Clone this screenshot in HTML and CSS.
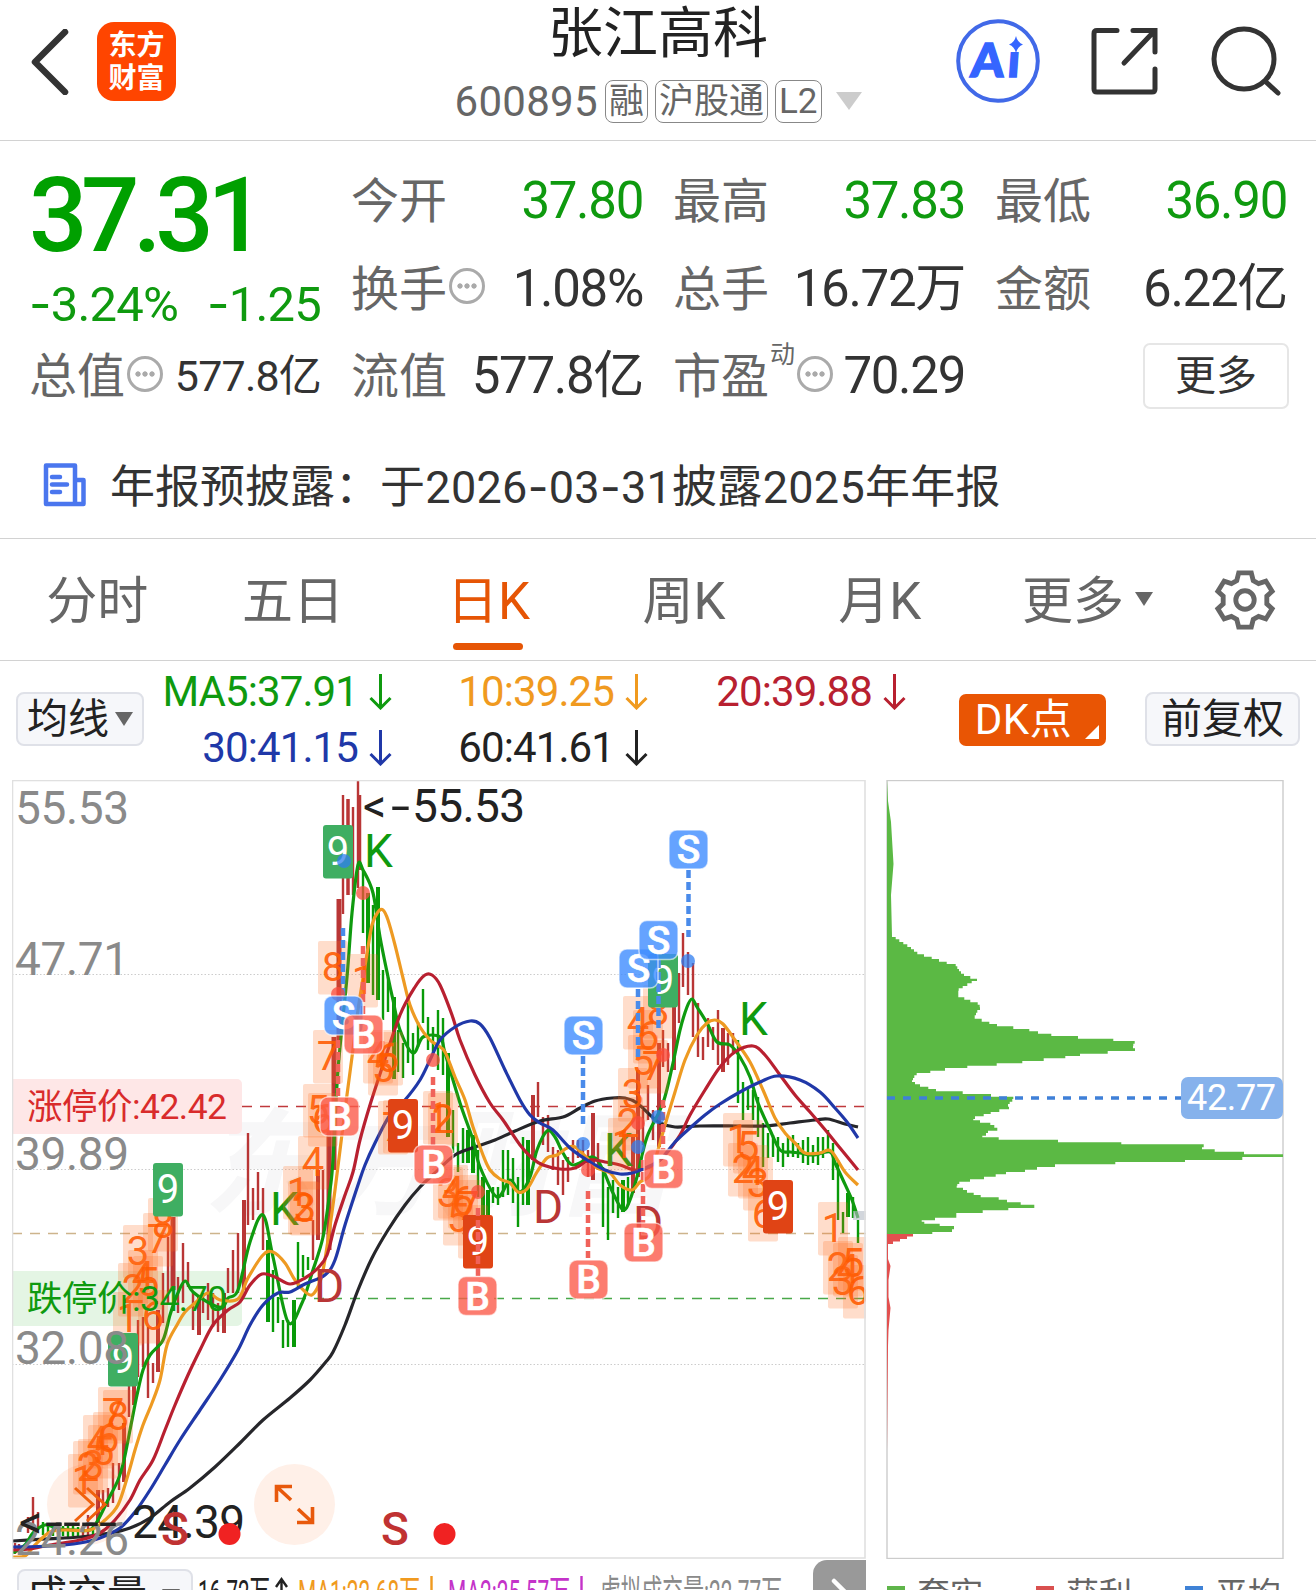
FILE: index.html
```
<!DOCTYPE html>
<html lang="zh-CN">
<head>
    <meta charset="UTF-8">
    <meta name="viewport" content="width=device-width, initial-scale=1.0">
    <title>张江高科 600895</title>
    <link rel="stylesheet" href="styles.css">
</head>
<body>
    <header class="header">
        <div class="header-left">
            <svg class="back" width="38" height="66" viewBox="0 0 38 66"><path d="M34 3 L4 33 L34 63"/></svg>
            <div class="logo"><span>东方</span><span>财富</span></div>
        </div>
        <div class="header-title">
            <h1>张江高科</h1>
            <div class="code">
                <span class="code-num">600895</span>
                <span class="tag">融</span>
                <span class="tag">沪股通</span>
                <span class="tag">L2</span>
                <i class="caret"></i>
            </div>
        </div>
        <div class="header-right">
            <svg class="ai" width="84" height="84" viewBox="0 0 84 84">
                <circle cx="42" cy="42" r="39.8"/>
                <text x="18" y="58" textLength="49" transform="skewX(-4)">Ai</text>
                <rect x="51" y="16" width="15" height="17"/>
                <path d="M60 17 Q61.500 23.500 67 25.500 Q61.500 27.500 60 34 Q58.500 27.500 53 25.500 Q58.500 23.500 60 17Z"/>
            </svg>
            <svg class="share" width="70" height="70" viewBox="0 0 70 70"><path d="M27 4.500 H7 Q4 4.500 4 7.500 V63 Q4 66 7 66 H62 Q65 66 65 63 V43 M43 4.500 H65 V26 M64 5.500 L34 37"/></svg>
            <svg class="search" width="72" height="72" viewBox="0 0 72 72"><circle cx="34" cy="34" r="30"/><path d="M56 57 L68 68"/></svg>
        </div>
    </header>

    <section class="quote">
        <div class="price-box">
            <div class="price">37.31</div>
            <div class="change"><span><span class="dash">-</span>3.24%</span><span><span class="dash">-</span>1.25</span></div>
        </div>
        <div class="item"><label>今开</label><b class="down">37.80</b></div>
        <div class="item"><label>最高</label><b class="down">37.83</b></div>
        <div class="item"><label>最低</label><b class="down">36.90</b></div>
        <div class="item"><label>换手<i class="info"></i></label><b>1.08%</b></div>
        <div class="item"><label>总手</label><b>16.72万</b></div>
        <div class="item"><label>金额</label><b>6.22亿</b></div>
        <div class="item small"><label>总值<i class="info"></i></label><b>577.8亿</b></div>
        <div class="item"><label>流值</label><b>577.8亿</b></div>
        <div class="item"><label>市盈<sup>动</sup><i class="info"></i></label><b>70.29</b></div>
        <div class="item more"><button class="more-btn">更多</button></div>
    </section>

    <section class="notice">
        <svg width="44" height="44" viewBox="0 0 44 44">
            <path d="M3 2.500 H32 V41 H3Z M32 17 H40.500 V41 H32 M9 14 H17 M9 21.500 H24 M9 29 H17"/>
        </svg>
        <p>年报预披露：<span>于2026<span class="dash">-</span>03<span class="dash">-</span>31披露2025年年报</span></p>
    </section>

    <nav class="tabs">
        <a>分时</a>
        <a>五日</a>
        <a class="active">日K</a>
        <a>周K</a>
        <a>月K</a>
        <a>更多<i class="caret-dark"></i></a>
        <svg class="gear" width="64" height="64" viewBox="-33 -33 66 66">
            <path d="M-6.500 -28 H6.500 L8.500 -20 L14 -17 L21.500 -19.500 L28 -9 L22.500 -4 V4 L28 9 L21.500 19.500 L14 17 L8.500 20 L6.500 28 H-6.500 L-8.500 20 L-14 17 L-21.500 19.500 L-28 9 L-22.500 4 V-4 L-28 -9 L-21.500 -19.500 L-14 -17 L-8.500 -20Z"/>
            <circle r="9.500"/>
        </svg>
    </nav>

    <section class="ma-bar">
        <button class="chip">均线<i class="caret-dark"></i></button>
        <div class="ma-list">
            <span class="ma5">MA5:37.91<svg class="arrow" viewBox="0 0 22 36"><path d="M11 0 V34 M1 24 L11 34 L21 24"/></svg></span>
            <span class="ma10">10:39.25<svg class="arrow" viewBox="0 0 22 36"><path d="M11 0 V34 M1 24 L11 34 L21 24"/></svg></span>
            <span class="ma20">20:39.88<svg class="arrow" viewBox="0 0 22 36"><path d="M11 0 V34 M1 24 L11 34 L21 24"/></svg></span>
            <span class="ma30">30:41.15<svg class="arrow" viewBox="0 0 22 36"><path d="M11 0 V34 M1 24 L11 34 L21 24"/></svg></span>
            <span class="ma60">60:41.61<svg class="arrow" viewBox="0 0 22 36"><path d="M11 0 V34 M1 24 L11 34 L21 24"/></svg></span>
        </div>
        <button class="dk">DK点</button>
        <button class="chip right">前复权</button>
    </section>

    <main class="charts">
        <svg id="kline" width="854" height="779" viewBox="12 780 854 779"></svg>
        <svg id="chips" width="400" height="779" viewBox="885 780 400 779"></svg>
    </main>

    <footer class="bottom">
        <button class="chip vol">成交量<i class="caret-dark"></i></button>
        <svg class="vol-text" width="600" height="31" viewBox="192 1559 600 31">
            <g font-size="36">
                <text x="198" y="1606" textLength="72" lengthAdjust="spacingAndGlyphs" fill="#222">16.72万</text>
                <path d="M281.500 1600 V1579 M276 1587 L281.500 1579 L287 1587" stroke="#222"/>
                <text x="298" y="1606" textLength="122" lengthAdjust="spacingAndGlyphs" fill="#f09a1f">MA1:22.68万</text>
                <path d="M431.500 1576 V1600" stroke="#f09a1f"/>
                <text x="448" y="1606" textLength="122" lengthAdjust="spacingAndGlyphs" fill="#c433c9">MA2:25.57万</text>
                <path d="M581.500 1576 V1600" stroke="#c433c9"/>
                <text x="600" y="1606" textLength="182" lengthAdjust="spacingAndGlyphs" fill="#8a8a8a">虚拟成交量:22.77万</text>
            </g>
        </svg>
        <div class="next"><svg width="30" height="40" viewBox="0 0 30 40"><path d="M3 3 L18 18 L3 33"/></svg></div>
        <div class="legend">
            <span><i class="lg-green"></i>套牢</span>
            <span><i class="lg-red"></i>获利</span>
            <span><i class="lg-blue"></i>平均</span>
        </div>
    </footer>

    <script src="chart.js"></script>
</body>
</html>
```
FILE: styles.css
```
* {
    box-sizing: border-box;
}
body {
    margin: 0;
    width: 1316px;
    height: 1590px;
    overflow: hidden;
    background-color: #fff;
    color: #333;
    font-family: Roboto, "Noto Sans CJK SC", sans-serif;
}
button {
    font-family: inherit;
    padding: 0;
    margin: 0;
    color: #222;
}
svg {
    display: block;
    flex: none;
}
i {
    display: inline-block;
    flex: none;
}
.dash {
    font-family: Inter, sans-serif;
}

/* header */
.header {
    display: grid;
    grid-template-columns: 360px 1fr 360px;
    height: 141px;
    border-bottom: 1px solid #d2d2d2;
}
.header-left {
    display: flex;
    align-items: flex-start;
    padding: 22px 0 0 31px;
}
.back {
    margin: 7px 28px 0 0;
    fill: none;
    stroke: #333;
    stroke-width: 6.5;
    stroke-linecap: round;
    stroke-linejoin: round;
}
.logo {
    display: flex;
    flex-direction: column;
    align-items: center;
    justify-content: center;
    width: 79px;
    height: 79px;
    border-radius: 17px;
    background-color: #ff4500;
    color: #fff;
    font-size: 28px;
    font-weight: bold;
    line-height: 33px;
}
.header-title {
    display: flex;
    flex-direction: column;
    align-items: center;
}
h1 {
    margin: 0;
    font-size: 55px;
    font-weight: 400;
    line-height: 66px;
    color: #222;
}
.code {
    display: flex;
    align-items: center;
    gap: 7px;
    margin-top: 13px;
    height: 44px;
    color: #666;
    white-space: nowrap;
}
.code-num {
    font-size: 42px;
    letter-spacing: 0.3px;
}
.tag {
    height: 43px;
    padding: 0 3px;
    border: 1.5px solid #888;
    border-radius: 8px;
    font-size: 35px;
    line-height: 41px;
}
.caret {
    margin-left: 7px;
    border: 13px solid transparent;
    border-top: 18px solid #ccc;
    border-bottom: 0;
}
.header-right {
    display: flex;
    align-items: flex-start;
}
.ai {
    margin: 19px 0 0 0;
    fill: none;
    stroke: #4169e8;
    stroke-width: 4;
}
.ai text {
    font-family: Lato, sans-serif;
    font-size: 47px;
    font-weight: 900;
    fill: #3565ff;
    stroke: #3565ff;
    stroke-width: 1.5;
}
.ai rect {
    fill: #fff;
    stroke: none;
}
.ai path {
    fill: #3565ff;
    stroke: none;
}
.share, .search {
    fill: none;
    stroke: #333;
    stroke-width: 5;
    stroke-linecap: round;
}
.share {
    margin: 26px 0 0 50px;
}
.search {
    margin: 25px 0 0 50px;
}

/* quote */
.quote {
    display: grid;
    grid-template-columns: repeat(4, 1fr);
    grid-template-rows: repeat(3, 87.5px);
    column-gap: 30px;
    padding: 16px 29px 0;
}
.price-box {
    grid-row: span 2;
    color: #00a000;
}
.price {
    margin-top: 6px;
    font-size: 103px;
    font-weight: 500;
    line-height: 106px;
    letter-spacing: -6.5px;
}
.change {
    display: flex;
    justify-content: space-between;
    padding-top: 10px;
    font-size: 49px;
    line-height: 50px;
    letter-spacing: -0.8px;
    color: #0f9a0f;
}
.item {
    display: flex;
    align-items: center;
    justify-content: space-between;
    white-space: nowrap;
}
.item label {
    display: flex;
    align-items: center;
    padding-top: 3px;
    font-size: 48px;
    line-height: 60px;
    color: #666;
}
.item b {
    font-size: 51px;
    font-weight: 400;
    line-height: 60px;
    padding-top: 1px;
    letter-spacing: -1.3px;
}
.item b.down {
    color: #0f9a0f;
}
.item.small b {
    font-size: 43px;
    letter-spacing: -0.8px;
}
.item sup {
    font-size: 25px;
    line-height: 25px;
    margin: 0 0 45px 1px;
}
.info {
    width: 36px;
    height: 36px;
    margin: 0 0 7px 2px;
    border: 3px solid #aaa;
    border-radius: 50%;
    background: radial-gradient(circle, #aaa 2.3px, transparent 3px) center / 8px 8px no-repeat,
        radial-gradient(circle, #aaa 2.3px, transparent 3px) 4px center / 8px 8px no-repeat,
        radial-gradient(circle, #aaa 2.3px, transparent 3px) 18px center / 8px 8px no-repeat;
}
.item.more {
    justify-content: flex-end;
    margin-right: -2px;
}
.more-btn {
    width: 146px;
    height: 66px;
    border: 2px solid #e6e6e6;
    border-radius: 7px;
    background-color: #fff;
    font-size: 41px;
    line-height: 58px;
    color: #333;
}

/* notice */
.notice {
    display: flex;
    align-items: center;
    height: 119px;
    padding: 12px 0 0 43px;
    border-bottom: 1px solid #d2d2d2;
}
.notice svg {
    fill: none;
    stroke: #4a76ee;
    stroke-width: 4.5;
    stroke-linejoin: round;
    stroke-linecap: round;
}
.notice p {
    margin: 5px 0 0 23px;
    font-size: 45px;
    line-height: 60px;
    white-space: nowrap;
}
.notice span {
    letter-spacing: 0.3px;
}

/* tabs */
.tabs {
    display: grid;
    grid-template-columns: repeat(5, 195.6px) 220px 1fr;
    height: 122px;
    border-bottom: 1px solid #d2d2d2;
    color: #666;
}
.tabs a {
    position: relative;
    display: flex;
    align-items: center;
    justify-content: center;
    padding: 6px 1px 0 0;
    font-size: 51px;
    line-height: 60px;
}
.tabs .active {
    color: #e65505;
}
.tabs .active::after {
    content: "";
    position: absolute;
    bottom: 10px;
    left: 62px;
    width: 70px;
    height: 7px;
    border-radius: 4px;
    background-color: #e65505;
}
.caret-dark {
    margin-left: 9px;
    border: 9px solid transparent;
    border-top: 14px solid #666;
    border-bottom: 0;
}
.tabs .caret-dark {
    margin: 0 0 6px 11px;
}
.gear {
    margin: 29px 0 0 15px;
    fill: none;
    stroke: #666;
    stroke-width: 5;
}

/* moving averages */
.ma-bar {
    display: flex;
    align-items: flex-start;
    height: 119px;
    padding-left: 16px;
}
.chip {
    display: flex;
    align-items: center;
    justify-content: center;
    width: 128px;
    height: 54px;
    margin-top: 31px;
    border: 2px solid #dfe1e8;
    border-radius: 8px;
    background-color: #f6f7fa;
    font-size: 41px;
    line-height: 50px;
}
.chip .caret-dark {
    margin-left: 6px;
}
.ma-list {
    display: grid;
    grid-template-columns: 248px 256px 258px;
    justify-items: end;
    padding-top: 3px;
    font-size: 42px;
    line-height: 56px;
    letter-spacing: -0.9px;
}
.ma-list span {
    display: flex;
    align-items: center;
}
.arrow {
    width: 23px;
    height: 36px;
    margin-left: 11px;
    fill: none;
    stroke: currentColor;
    stroke-width: 3;
}
.ma5 { color: #0f9a0f; }
.ma10 { color: #f09a1f; }
.ma20 { color: #b82030; }
.ma30 { color: #2038a8; }
.ma60 { color: #222; }
.dk {
    position: relative;
    width: 147px;
    height: 52px;
    margin: 33px 0 0 53px;
    padding-right: 18px;
    border: 0;
    border-radius: 7px;
    background-color: #e95504;
    color: #fff;
    font-size: 42px;
    line-height: 49px;
    letter-spacing: 0.5px;
}
.dk::after {
    content: "";
    position: absolute;
    right: 7px;
    bottom: 7px;
    border-left: 14px solid transparent;
    border-bottom: 14px solid #fff;
}
.chip.right {
    width: 155px;
    margin-left: 39px;
}

/* charts */
.charts {
    display: flex;
    gap: 19px;
    padding-left: 12px;
}

/* bottom bar */
.bottom {
    display: flex;
    align-items: flex-start;
    height: 31px;
    padding-left: 17px;
    overflow: hidden;
}
.chip.vol {
    flex: none;
    width: 176px;
    margin-top: 10px;
    justify-content: flex-start;
    padding-left: 8px;
    font-size: 40px;
    line-height: 48px;
}
.chip.vol .caret-dark {
    margin-left: 15px;
}
.vol-text {
    margin-left: -1px;
}
.vol-text path {
    fill: none;
    stroke-width: 2.4;
}
.next {
    flex: none;
    width: 53px;
    height: 50px;
    margin: 1px 0 0 21px;
    padding: 18px 0 0 18px;
    border-radius: 14px 0 0 0;
    background-color: #999;
}
.next path {
    fill: none;
    stroke: #fff;
    stroke-width: 4.5;
    stroke-linecap: round;
}
.legend {
    display: flex;
    gap: 53px;
    margin: 15px 0 0 21px;
    font-size: 33px;
    line-height: 42px;
    color: #666;
}
.legend span {
    display: flex;
    align-items: center;
    white-space: nowrap;
}
.legend i {
    width: 18px;
    height: 18px;
    margin: 0 12px 0 0;
}
.lg-green { background-color: #5fb54a; }
.lg-red { background-color: #d9504f; }
.lg-blue { background-color: #3f82d6; }
```
FILE: chart.js
```
const RED = '#b93636';
const GREEN = '#0f9a0f';

function tag(name, attrs, text = '') {
    const a = Object.entries(attrs).map(([k, v]) => `${k}="${v}"`).join(' ');
    return `<${name} ${a}>${text}</${name}>`;
}

// smooth curve through the points
function curve(pts) {
    let d = `M${pts[0]}`;
    for (let i = 0; i < pts.length - 1; i++) {
        const p0 = pts[i - 1] || pts[i], p1 = pts[i], p2 = pts[i + 1], p3 = pts[i + 2] || p2;
        d += `C${p1[0] + (p2[0] - p0[0]) / 6},${p1[1] + (p2[1] - p0[1]) / 6} ${p2[0] - (p3[0] - p1[0]) / 6},${p2[1] - (p3[1] - p1[1]) / 6} ${p2}`;
    }
    return d;
}

function pairs(str) {
    return str.trim().split(/\s+/).map(p => p.split(',').map(Number));
}

// x,top,bottom[,width]
const redBars = pairs(`
15,1543,1554 19,1544,1553 28,1517,1533 33,1497,1530 38,1512,1530 58,1524,1534 83,1526,1536 88,1515,1536
98,1490,1523,4 103,1490,1510 108,1488,1507 113,1463,1503 119,1463,1490 124,1423,1482,4 129,1383,1417 134,1385,1405,4
138,1320,1377 143,1317,1367 148,1327,1398 153,1363,1383 158,1310,1372,4 163,1273,1323 168,1237,1303 173,1217,1290,5
178,1277,1313 183,1243,1303 188,1262,1287 193,1293,1330 199,1297,1335,4 203,1293,1313 208,1283,1320 213,1293,1327
218,1303,1332 224,1293,1333,4 228,1268,1293 233,1250,1293 238,1233,1293 244,1200,1290,4 248,1133,1225 253,1188,1220
258,1172,1210 263,1188,1250 313,1220,1260 318,1170,1240,4 323,1170,1237 329,1130,1250,5 334,1037,1170,5 339,899,1040,5
343,795,914 348,799,895,3.500 353,807,895 358,780,888,2.400 359.500,795,870,3.500
533,1095,1160,4 538,1082,1117 543,1117,1145 548,1115,1152 553,1147,1170 558,1150,1185 563,1160,1195 568,1157,1182
573,1140,1163 578,1140,1158 583,1140,1160 588,1150,1177 593,1113,1180,4 598,1143,1170 633,1137,1193,4 638,1070,1177,4
643,1110,1145 648,1085,1120 653,1110,1140 659,1043,1147,4 663,1030,1067 668,1043,1072 674,1003,1070,4 679,973,1023
683,933,987 688,952,995 693,963,1037 698,1003,1057 703,1037,1060 708,1018,1047 713,1027,1050 718,1010,1065
723,1028,1072,4 728,1033,1065 733,1033,1053`);

const greenBars = pairs(`
43,1522,1535 48,1524,1534 53,1526,1536 63,1526,1536 68,1525,1537 73,1526,1536 78,1527,1537 93,1526,1537
268,1240,1322,4 273,1270,1332 278,1297,1323 283,1320,1348 288,1320,1347 294,1300,1347,4 298,1242,1287 303,1255,1277 308,1257,1270
363,870,933 368,893,983,4 373,905,995 378,887,1000,4 383,970,1020 388,977,1012 394,997,1079,4 398,1030,1072 403,1043,1078
408,1003,1063 413,1033,1075 418,1022,1047 423,989,1023 428,1017,1050 433,1027,1053 438,1010,1070 443,1018,1075
448,1053,1137,4 453,1110,1153 458,1143,1172 463,1128,1163 468,1130,1163,4 473,1135,1173,4 478,1150,1197 483,1177,1216,4
488,1190,1218,4 493,1187,1203 498,1187,1205 503,1150,1197 508,1150,1195 513,1158,1203 518,1177,1227 523,1137,1205
528,1140,1205,4 603,1167,1227 608,1187,1240 613,1180,1213 618,1187,1218 623,1180,1212,4 628,1177,1205
738,1040,1103 743,1082,1120 748,1087,1110 753,1090,1120 758,1097,1137 763,1123,1167 768,1133,1158 773,1135,1157
778,1137,1162 783,1143,1167 788,1137,1157 793,1135,1157 798,1143,1158 803,1140,1163 808,1137,1165 813,1145,1163
818,1137,1165 823,1137,1158 828,1130,1153 833,1143,1180 838,1160,1220 843,1212,1233 848,1193,1217,4 853,1197,1218 858,1220,1243`);

const lines = [
    ['#26262a', `13,1541 45,1539 80,1537 110,1533 130,1528 150,1518 170,1502 190,1488 215,1467 240,1443 263,1420 290,1398 310,1380 325,1363 333,1352
        345,1325 358,1290 372,1258 388,1230 405,1205 420,1187 435,1173 455,1155 475,1147 495,1140 515,1131 540,1121 563,1117 580,1108 595,1101
        612,1098 625,1098 637,1103 650,1115 660,1123 675,1127 700,1126 740,1126 765,1126 790,1123 815,1120 828,1119 845,1124 858,1127`],
    [GREEN, `13,1553 25,1545 33,1533 45,1525 60,1529 75,1530 90,1530 98,1520 108,1500 118,1480 124,1460 130,1430 137,1395 143,1370 150,1355 163,1340
        170,1315 177,1295 185,1281 193,1292 213,1305 223,1307 228,1298 238,1290 250,1242 263,1215 273,1257 288,1322 302,1303 312,1273 323,1237 330,1190
        333,1160 338,1070 347,977 352,913 358,865 363,870 373,893 380,937 388,977 393,1000 400,1030 413,1053 423,1037 440,1037 445,1053 460,1103 473,1140
        480,1167 497,1197 510,1180 520,1192 530,1177 537,1150 547,1131 555,1137 563,1153 573,1165 593,1157 603,1170 613,1193 623,1210 630,1200 638,1173
        647,1137 663,1103 673,1063 680,1030 687,1007 692,999 697,1007 707,1023 717,1042 730,1045 740,1057 750,1077 758,1103 770,1130 780,1150 790,1152
        800,1153 813,1155 830,1152 835,1163 843,1180 852,1200 858,1218`],
    ['#ee9a22', `13,1557 25,1556 35,1545 50,1532 65,1530 90,1530 105,1520 118,1505 128,1475 135,1450 143,1425 152,1403 160,1380 167,1345 177,1325 185,1312
        195,1303 208,1293 220,1300 238,1299 248,1278 263,1255 273,1252 285,1263 295,1280 308,1294 315,1292 322,1275 328,1240 335,1190 345,1110 352,1057
        358,1010 366,960 372,925 378,912 383,910 388,920 395,945 403,978 410,1005 420,1027 430,1040 437,1045 445,1052 455,1077 465,1100 473,1127 483,1155
        490,1170 500,1179 510,1183 518,1192 527,1189 537,1172 547,1158 557,1155 567,1148 575,1147 587,1158 597,1168 610,1173 620,1185 632,1190 640,1182
        650,1175 658,1150 665,1125 675,1092 685,1060 697,1035 707,1023 715,1020 723,1024 735,1040 750,1062 763,1090 775,1118 785,1133 795,1143 805,1153
        820,1153 831,1151 845,1172 858,1185`],
    ['#b82030', `13,1550 30,1549 50,1545 80,1540 100,1533 115,1520 130,1500 140,1480 153,1460 165,1430 175,1405 188,1375 200,1350 213,1325 228,1310
        240,1302 250,1285 262,1274 275,1277 290,1284 305,1278 318,1268 327,1255 335,1225 345,1195 353,1172 360,1140 370,1105 383,1065 400,1015 415,987
        425,975 432,975 440,985 452,1015 460,1040 475,1075 490,1103 503,1120 520,1145 532,1158 543,1165 560,1169 575,1168 590,1160 605,1162 620,1165
        635,1170 650,1167 665,1155 680,1135 690,1115 705,1090 720,1067 735,1052 753,1046 765,1055 780,1075 795,1095 810,1112 827,1132 840,1148 858,1170`],
    ['#2038a8', `13,1547 50,1546 80,1543 100,1538 120,1528 135,1512 150,1490 165,1465 180,1440 200,1410 220,1380 238,1350 250,1325 263,1305 278,1293
        290,1292 305,1284 325,1275 335,1260 345,1225 358,1185 365,1165 375,1143 390,1115 405,1100 420,1080 430,1060 440,1040 455,1027 470,1021 480,1024
        490,1038 505,1070 520,1100 530,1115 540,1123 553,1130 570,1148 587,1160 605,1170 620,1174 632,1173 645,1168 660,1160 675,1142 690,1128 705,1115
        720,1104 740,1092 760,1082 777,1076 800,1080 820,1092 835,1108 847,1122 858,1138`]
];

// x,y,count
const counts = pairs(`
68,1454,1 73,1441,2 78,1439,3 83,1415,4 88,1425,5 93,1412,6 98,1387,7 103,1390,8
113,1292,1 118,1263,2 123,1225,3 128,1250,4 133,1256,5 138,1290,6 143,1213,7 148,1198,8
283,1166,1 288,1181,2 290,1182,3 298,1136,4 303,1084,5 308,1093,6 313,1030,7 318,941,8
348,954,1 363,1030,4 368,1042,5 373,1032,6 378,1101,7 383,1100,8
423,1091,1 428,1093,2 433,1167,3 438,1165,4 443,1192,5 448,1175,6 453,1180,7 458,1205,8
608,1118,1 613,1097,2 618,1068,3 623,996,4 628,1035,5 633,1010,6 638,1040,7 643,985,8
723,1113,1 728,1143,2 733,1120,5 738,1145,4 743,1157,3 748,1188,6
818,1202,1 823,1241,2 828,1255,3 833,1243,4 838,1237,5 843,1265,6`);

const nines = [[108, 1333, '#3fae62'], [153, 1163, '#3fae62'], [323, 825, '#3fae62'], [648, 954, '#3fae62'],
    [388, 1099, '#e04415'], [463, 1215, '#e04415'], [763, 1180, '#e04415']];

// x,from,to
const blueDash = pairs('343,928,995 583,1056,1125 638,989,1057 658.500,960,1030 688.500,870,937');
const redDash = pairs('363,946,1014 338,1040,1097 433,1077,1145 478,1208,1276 588,1191,1258 643,1160,1223 663,1100,1150');
const blueDots = pairs('344,861 583,1144 638,1147 658,1117 688,961');
const redDots = pairs('363,893 338,994 433,1060 478,1192 588,1170 638,1123 663,1055');
const sells = pairs('324,996 564,1016 619,949 639,920.500 669,830');
const buys = pairs('344,1015 320,1097 414,1145 458,1276.500 569,1260 624,1223 644,1149.500');

function drawKline() {
    let s = '';
    s += tag('text', { x: 203, y: 1206, 'font-size': 116, 'font-weight': 700, 'font-style': 'italic', textLength: 470, fill: '#f7f7f8' }, '东方财富');
    for (const y of [974.5, 1169.5, 1364.5]) {
        s += tag('path', { d: `M12 ${y}H866`, stroke: '#ccc', 'stroke-dasharray': '1.500 2' });
    }
    s += tag('path', { d: 'M12 1233.500H866', stroke: '#cdb48c', 'stroke-width': 1.5, 'stroke-dasharray': '10 8' });
    s += tag('path', { d: 'M242 1106.500H866', stroke: '#c0393c', 'stroke-width': 1.5, 'stroke-dasharray': '10 8' });
    s += tag('path', { d: 'M242 1298.500H866', stroke: '#49a849', 'stroke-width': 1.5, 'stroke-dasharray': '10 8' });
    s += tag('rect', { x: 4, y: 1079, width: 238, height: 55, rx: 5, fill: '#fee7e7' });
    s += tag('rect', { x: 4, y: 1271, width: 238, height: 55, rx: 5, fill: '#e4f5e4' });
    s += tag('circle', { cx: 87.5, cy: 1504.5, r: 40.5, fill: '#fff0e8' });
    s += tag('circle', { cx: 294.5, cy: 1504.5, r: 40.5, fill: '#fff0e8' });

    const bar = color => ([x, y1, y2, w = 2.4]) => tag('path', { d: `M${x} ${y1}V${y2}`, stroke: color, 'stroke-width': w });
    s += redBars.map(bar(RED)).join('');
    s += greenBars.map(bar('#089a08')).join('');
    for (const [color, pts] of lines) {
        s += tag('path', { d: curve(pairs(pts)), fill: 'none', stroke: color, 'stroke-width': 3.2 });
    }

    const label = (x, y, t, fill, extra = {}) => tag('text', { x, y, 'font-size': 46, fill, ...extra }, t);
    s += label(364, 867, 'K', GREEN) + label(270, 1225, 'K', GREEN) + label(739, 1035, 'K', GREEN) + label(604, 1166, 'K', GREEN);
    s += label(314, 1302, 'D', RED) + label(533, 1223, 'D', RED) + label(633, 1239, 'D', RED);

    for (const [x, y, n] of counts) {
        s += tag('rect', { x, y, width: 30, height: 53.5, rx: 2, fill: '#ff6a20', 'fill-opacity': 0.23 });
        s += tag('text', { x: x + 15, y: y + 40, 'font-size': 40, 'text-anchor': 'middle', fill: '#ff5a00', 'fill-opacity': 0.9 }, n);
    }
    for (const [x, y, fill] of nines) {
        s += tag('rect', { x, y, width: 30, height: 53.5, rx: 3, fill });
        s += tag('text', { x: x + 15, y: y + 40, 'font-size': 40, 'text-anchor': 'middle', fill: '#fff' }, 9);
    }

    // limit prices
    s += tag('text', { x: 27, y: 1119, 'font-size': 35.5, textLength: 200, fill: '#d92b2b' }, '涨停价:42.42');
    s += tag('text', { x: 27, y: 1311, 'font-size': 35.5, textLength: 200, fill: GREEN }, '跌停价:34.70');

    s += blueDash.map(([x, a, b]) => tag('path', { d: `M${x} ${a}V${b}`, stroke: '#4a8bea', 'stroke-width': 4.5, 'stroke-dasharray': '8 4' })).join('');
    s += redDash.map(([x, a, b]) => tag('path', { d: `M${x} ${a}V${b}`, stroke: '#f0625a', 'stroke-width': 4.5, 'stroke-dasharray': '8 4' })).join('');
    s += blueDots.map(([cx, cy]) => tag('circle', { cx, cy, r: 7, fill: '#2f7df0', 'fill-opacity': 0.75 })).join('');
    s += redDots.map(([cx, cy]) => tag('circle', { cx, cy, r: 7, fill: '#fa4b3c', 'fill-opacity': 0.75 })).join('');
    const badge = (fill, t) => ([x, y]) =>
        tag('rect', { x, y, width: 39, height: 39, rx: 8, fill, 'fill-opacity': 0.8, stroke: '#fff', 'stroke-opacity': 0.6, 'stroke-width': 1.5 }) +
        tag('text', { x: x + 19.5, y: y + 33, 'font-size': 39, 'font-weight': 500, 'text-anchor': 'middle', fill: '#fff', stroke: '#fff', 'stroke-width': 0.6 }, t);
    s += sells.map(badge('#3f8cff', 'S')).join('');
    s += buys.map(badge('#fb5b4b', 'B')).join('');

    // price axis and extremes
    [[55.53, 824], [47.71, 975], [39.89, 1170], [32.08, 1364], [24.26, 1555]].forEach(([v, y]) => {
        s += label(15, y, v, '#8a8a8a', { textLength: 114 });
    });
    s += label(363, 822, '&lt;', '#222') + label(391, 822, '-', '#222', { textLength: 19, lengthAdjust: 'spacingAndGlyphs' });
    s += label(412, 822, '55.53', '#222', { textLength: 113 });
    s += label(19, 1538, '&lt;', '#222') + label(45, 1538, '----', '#222', { textLength: 72, lengthAdjust: 'spacingAndGlyphs' });
    s += label(132, 1538, '24.39', '#222', { textLength: 113 });
    s += label(161, 1545, 'S', '#c03232', { 'font-weight': 500 }) + label(381, 1545, 'S', '#c03232', { 'font-weight': 500 });
    s += tag('circle', { cx: 229.5, cy: 1534, r: 11, fill: '#f02222' }) + tag('circle', { cx: 444.5, cy: 1534, r: 11, fill: '#f02222' });

    // expand and scroll icons
    s += tag('path', { d: 'M291 1500L276.500 1486.500M276.500 1502V1486.500H292M298 1509L312.500 1522.500M312.500 1507V1522.500H297', fill: 'none', stroke: '#e8590c', 'stroke-width': 3.6 });
    s += tag('path', { d: 'M75 1488L93 1504.500L75 1521M87 1488L105 1504.500L87 1521', fill: 'none', stroke: '#f0600c', 'stroke-width': 3 });
    s += tag('rect', { x: 853, y: 1211, width: 13, height: 9, fill: '#b4bac4', 'fill-opacity': 0.6 });
    s += tag('rect', { x: 12.5, y: 780.5, width: 852.5, height: 777.5, fill: 'none', stroke: '#e0e0e0', 'stroke-width': 1.6 });
    document.getElementById('kline').innerHTML = s;
}

// y,right edge in thirds of a pixel, one step per price level
const steps = pairs(`
36,47 43,58 51,70 58,82 66,93 73,102 80,112 88,132 95,155 102,177 110,200 117,227 124,232 132,237 139,243 146,252 153,271 161,291
168,275 175,262 183,248 190,236 197,235 217,253 224,271 232,293 239,299 247,300 255,292 263,288 271,284 281,305 290,328 297,351
304,400 312,448 319,474 326,514 333,594 341,700 348,764 356,760 363,759 370,765 378,683 386,600 393,556 400,491 408,427 415,350
422,262 429,195 437,151 444,110 451,103 459,99 466,96 471,105 478,120 485,145 492,168 499,248 507,333 515,400 522,397 530,389
537,384 545,387 553,358 561,332 567,311 574,285 582,280 586,300 593,331 600,343 608,352 617,324 624,318 632,307 637,356 644,534
652,724 658,971 667,966 673,1004 680,1092 688,1209 696,1087 705,915 711,706 718,525 726,471 734,435 741,378 748,347 755,312
763,270 770,238 777,232 782,230 788,249 795,261 803,281 810,302 817,356 824,381 832,422 839,463 849,385 856,308 864,229 878,165
886,125 890,133 896,179 903,222 913,216 921,157`);

function drawChips() {
    let d = 'M887 780L888 801L891 822L893.500 864L891 895L892 936';
    for (const [y, x] of steps) {
        d += `V${(925 + y / 3).toFixed(1)}H${(880 + x / 3).toFixed(1)}`;
    }
    d += 'V1234H887Z';
    let s = tag('rect', { x: 887, y: 780.5, width: 396, height: 778, fill: 'none', stroke: '#ccc', 'stroke-width': 1.4 });
    s += tag('path', { d, fill: '#5bb944' });
    s += tag('path', { d: 'M887 1234H913V1236.500H907V1239H900V1241.500H893V1244H888V1259L890.500 1266L888.500 1280L888.500 1297L890.500 1308L888.500 1330L888 1346L887 1450Z', fill: '#e2504f' });
    s += tag('path', { d: 'M887 1098H1181', stroke: '#3f80d8', 'stroke-width': 3.5, 'stroke-dasharray': '8 8' });
    s += tag('rect', { x: 1181, y: 1077, width: 102, height: 42, rx: 7, fill: '#86b2ec' });
    s += tag('text', { x: 1187, y: 1110, 'font-size': 36, textLength: 89, fill: '#fff' }, '42.77');
    document.getElementById('chips').innerHTML = s;
}

drawKline();
drawChips();
```
